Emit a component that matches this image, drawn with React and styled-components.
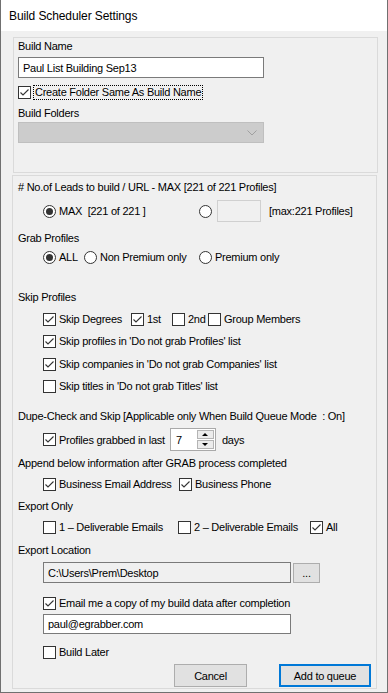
import React from 'react';
import styled, { createGlobalStyle } from 'styled-components';

const GlobalStyle = createGlobalStyle`
  html, body { margin: 0; padding: 0; background: #f0f0f0; }
  body {
    font-family: "Liberation Sans", Arial, sans-serif;
    font-size: 11px;
    letter-spacing: -0.25px;
    color: #000;
  }
`;

const Window = styled.div`
  width: 388px;
  height: 693px;
  box-sizing: border-box;
  border: 1px solid #707070;
  border-top: none;
  background: #f0f0f0;
  display: flex;
  flex-direction: column;
`;

const TitleBar = styled.div`
  height: 31px;
  flex: none;
  background: #fff;
  display: flex;
  align-items: center;
  padding-left: 8px;
  font-size: 12px;
  letter-spacing: -0.1px;
`;

const Body = styled.div`
  display: flex;
  flex-direction: column;
  gap: 2px;
  padding: 6px 9px 0 11px;
`;

const Panel = styled.div`
  box-sizing: border-box;
  width: 365px;
  height: ${p => p.$h}px;
  margin-left: ${p => p.$ml || 0}px;
  border: 1px solid #dadada;
  padding: ${p => p.$pad};
  display: flex;
  flex-direction: column;
`;

const Label = styled.div`
  line-height: 16px;
  height: 16px;
  margin-top: ${p => p.$mt || 0}px;
  white-space: nowrap;
`;

const Row = styled.div`
  display: flex;
  align-items: center;
  height: ${p => p.$h || 16}px;
  margin-top: ${p => p.$mt || 0}px;
  padding-left: ${p => p.$indent || 0}px;
  white-space: nowrap;
`;

const Item = styled.div`
  display: flex;
  align-items: center;
  gap: 3px;
  flex: none;
  width: ${p => (p.$w ? `${p.$w}px` : 'auto')};
`;

const Box = styled.span`
  box-sizing: border-box;
  width: 13px;
  height: 13px;
  border: 1px solid #333;
  background: #fff;
  display: inline-flex;
  align-items: center;
  justify-content: center;
  flex: none;
`;

const Round = styled(Box)`
  border-radius: 50%;
`;

const Dot = styled.span`
  width: 7px;
  height: 7px;
  border-radius: 50%;
  background: #333;
`;

const FocusText = styled.span`
  border: 1px dotted #000;
  line-height: 13px;
  padding: 0 1px;
  margin-left: -1px;
`;

const TextBox = styled.div`
  box-sizing: border-box;
  width: ${p => p.$w}px;
  height: ${p => p.$h || 21}px;
  margin-top: ${p => p.$mt || 0}px;
  margin-left: ${p => p.$ml || 0}px;
  border: 1px solid ${p => p.$border || '#7a7a7a'};
  background: ${p => p.$bg || '#fff'};
  display: flex;
  align-items: center;
  padding-left: 4px;
  flex: none;
  white-space: nowrap;
`;

const Select = styled(TextBox)`
  justify-content: flex-end;
  padding-right: 6px;
`;

const Spinner = styled.div`
  box-sizing: border-box;
  width: 46px;
  height: 23px;
  border: 1px solid #a9a9a9;
  background: #fff;
  display: flex;
  margin: 0 6px 0 5px;
`;

const SpinValue = styled.div`
  flex: 1;
  padding-left: 5px;
  display: flex;
  align-items: center;
`;

const SpinButtons = styled.div`
  width: 17px;
  display: flex;
  flex-direction: column;
  gap: 1px;
  padding: 1px 1px 1px 0;
`;

const SpinBtn = styled.div`
  flex: 1;
  box-sizing: border-box;
  border: 1px solid #b4b4b4;
  background: #ececec;
  display: flex;
  align-items: center;
  justify-content: center;
  &::after {
    content: '';
    width: 0;
    height: 0;
    border-left: 3px solid transparent;
    border-right: 3px solid transparent;
    ${p => (p.$down ? 'border-top: 3px solid #000;' : 'border-bottom: 3px solid #000;')}
  }
`;

const Button = styled.div`
  box-sizing: border-box;
  width: ${p => p.$w}px;
  height: ${p => p.$h || 23}px;
  margin-left: ${p => p.$ml || 0}px;
  background: #e1e1e1;
  border: ${p => (p.$primary ? '2px solid #0078d7' : '1px solid #adadad')};
  display: flex;
  align-items: center;
  justify-content: center;
  flex: none;
`;

const ButtonRow = styled.div`
  display: flex;
  justify-content: flex-end;
  gap: 32px;
  margin-top: 4px;
  padding-right: 5px;
`;

const Note = styled.span`
  margin-left: ${p => p.$ml || 0}px;
`;

function Check({ checked }) {
  return (
    <Box>
      {checked && (
        <svg width="11" height="11" viewBox="0 0 11 11">
          <path d="M1.5 5.5 L4 8 L9.5 2.5" fill="none" stroke="#333" strokeWidth="1.1" />
        </svg>
      )}
    </Box>
  );
}

function Radio({ checked }) {
  return <Round>{checked && <Dot />}</Round>;
}

function CheckItem({ checked, w, children }) {
  return (
    <Item $w={w}>
      <Check checked={checked} />
      <span>{children}</span>
    </Item>
  );
}

function RadioItem({ checked, w, children }) {
  return (
    <Item $w={w}>
      <Radio checked={checked} />
      {children && <span>{children}</span>}
    </Item>
  );
}

export default function App() {
  return (
    <>
      <GlobalStyle />
      <Window>
        <TitleBar>Build Scheduler Settings</TitleBar>
        <Body>
          <Panel $h={136} $ml={1} $pad="0 0 0 4px">
            <Label>Build Name</Label>
            <TextBox $w={246} $mt={3}>Paul List Building Sep13</TextBox>
            <Row $mt={6}>
              <Item>
                <Check checked />
                <FocusText>Create Folder Same As Build Name</FocusText>
              </Item>
            </Row>
            <Label $mt={5}>Build Folders</Label>
            <Select $w={246} $mt={1} $bg="#cccccc" $border="#bfbfbf">
              <svg width="10" height="6" viewBox="0 0 10 6">
                <path d="M0.5 0.5 L5 5 L9.5 0.5" fill="none" stroke="#a0a0a0" strokeWidth="1" />
              </svg>
            </Select>
          </Panel>

          <Panel $h={514} $pad="3px 0 0 5px">
            <Label># No.of Leads to build / URL - MAX [221 of 221 Profiles]</Label>
            <Row $mt={5} $h={22} $indent={25}>
              <RadioItem checked w={156}>MAX&nbsp;&nbsp;[221 of 221 ]</RadioItem>
              <RadioItem />
              <TextBox $w={44} $h={22} $ml={5} $bg="#f0f0f0" $border="#d0d0d0" />
              <Note $ml={8}>[max:221 Profiles]</Note>
            </Row>

            <Label $mt={8}>Grab Profiles</Label>
            <Row $mt={3} $indent={25}>
              <RadioItem checked w={41}>ALL</RadioItem>
              <RadioItem w={115}>Non Premium only</RadioItem>
              <RadioItem>Premium only</RadioItem>
            </Row>

            <Label $mt={24}>Skip Profiles</Label>
            <Row $mt={6} $indent={25}>
              <CheckItem checked w={88}>Skip Degrees</CheckItem>
              <CheckItem checked w={41}>1st</CheckItem>
              <CheckItem w={36}>2nd</CheckItem>
              <CheckItem>Group Members</CheckItem>
            </Row>
            <Row $mt={6} $indent={25}>
              <CheckItem checked>Skip profiles in 'Do not grab Profiles' list</CheckItem>
            </Row>
            <Row $mt={7} $indent={25}>
              <CheckItem checked>Skip companies in 'Do not grab Companies' list</CheckItem>
            </Row>
            <Row $mt={6} $indent={25}>
              <CheckItem>Skip titles in 'Do not grab Titles' list</CheckItem>
            </Row>

            <Label $mt={14}>Dupe-Check and Skip [Applicable only When Build Queue Mode&nbsp;&nbsp;: On]</Label>
            <Row $mt={4} $h={23} $indent={25}>
              <CheckItem checked>Profiles grabbed in last</CheckItem>
              <Spinner>
                <SpinValue>7</SpinValue>
                <SpinButtons>
                  <SpinBtn />
                  <SpinBtn $down />
                </SpinButtons>
              </Spinner>
              <span>days</span>
            </Row>

            <Label $mt={4}>Append below information after GRAB process completed</Label>
            <Row $mt={5} $indent={25}>
              <CheckItem checked w={136}>Business Email Address</CheckItem>
              <CheckItem checked>Business Phone</CheckItem>
            </Row>

            <Label $mt={6}>Export Only</Label>
            <Row $mt={5} $indent={25}>
              <CheckItem w={135}>1 – Deliverable Emails</CheckItem>
              <CheckItem w={132}>2 – Deliverable Emails</CheckItem>
              <CheckItem checked>All</CheckItem>
            </Row>

            <Label $mt={7}>Export Location</Label>
            <Row $mt={4} $h={21} $indent={25}>
              <TextBox $w={248} $h={21} $bg="#f0f0f0">C:\Users\Prem\Desktop</TextBox>
              <Button $w={27} $h={20} $ml={2}>...</Button>
            </Row>

            <Row $mt={12} $indent={25}>
              <CheckItem checked>Email me a copy of my build data after completion</CheckItem>
            </Row>
            <Row $mt={3} $h={20} $indent={25}>
              <TextBox $w={248} $h={20}>paul@egrabber.com</TextBox>
            </Row>

            <Row $mt={10} $indent={25}>
              <CheckItem>Build Later</CheckItem>
            </Row>

            <ButtonRow>
              <Button $w={73}>Cancel</Button>
              <Button $w={92} $primary>Add to queue</Button>
            </ButtonRow>
          </Panel>
        </Body>
      </Window>
    </>
  );
}
